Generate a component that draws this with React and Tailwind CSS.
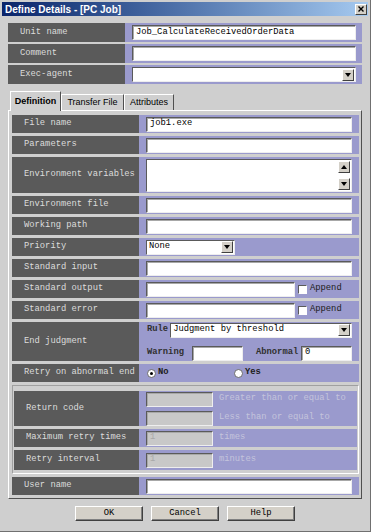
import React from 'react';

const mono = { fontFamily: '"Liberation Mono", "DejaVu Sans Mono", monospace' };

function Label({ children, className = 'w-[127px]' }) {
  return (
    <div className={`bg-[#5a5a5a] text-[#dcdcdc] text-[8.8px] pl-[12px] flex items-center shrink-0 ${className}`}>
      {children}
    </div>
  );
}

function Field({ value = '', className = 'flex-1', disabled = false }) {
  return (
    <div
      className={`h-[15px] border border-t-[#5a5a5a] border-l-[#5a5a5a] border-r-[#eeeeee] border-b-[#eeeeee] shadow-[inset_1px_1px_0_#a8a8a8] flex items-center px-[3px] text-[8.8px] ${disabled ? 'bg-[#c8c8c8] text-[#a8a8a8]' : 'bg-white text-black'} ${className}`}
    >
      {value}
    </div>
  );
}

function Arrow({ up = false }) {
  return (
    <div className="w-[12px] h-[12px] bg-[#d4d0c8] border border-t-white border-l-white border-r-[#404040] border-b-[#404040] flex items-center justify-center">
      <svg width="6" height="4" viewBox="0 0 6 4">
        {up ? <path d="M0 4 L3 0 L6 4 Z" fill="#000" /> : <path d="M0 0 L6 0 L3 4 Z" fill="#000" />}
      </svg>
    </div>
  );
}

function Select({ value = '', className = 'flex-1' }) {
  return (
    <div className={`h-[15px] bg-white border border-t-[#5a5a5a] border-l-[#5a5a5a] border-r-[#eeeeee] border-b-[#eeeeee] flex items-center justify-between pl-[2px] pr-[1px] text-[8.8px] text-black ${className}`}>
      <span>{value}</span>
      <Arrow />
    </div>
  );
}

function Row({ label, h = 'h-[18px]', labelClass = 'w-[127px]', children }) {
  return (
    <div className={`flex ${h}`}>
      <Label className={labelClass}>{label}</Label>
      <div className="flex-1 bg-[#9a9acd] flex items-center pl-[7px] pr-[7px]">{children}</div>
    </div>
  );
}

function Check() {
  return <div className="w-[9px] h-[9px] bg-white border border-t-[#5a5a5a] border-l-[#5a5a5a] border-r-white border-b-white shrink-0" />;
}

function Radio({ on }) {
  return (
    <div className="w-[9px] h-[9px] rounded-full bg-white border border-[#6a6a6a] flex items-center justify-center shrink-0">
      {on && <div className="w-[3px] h-[3px] rounded-full bg-black" />}
    </div>
  );
}

function Button({ children }) {
  return (
    <div className="w-[68px] h-[15px] bg-[#d4d0c8] border border-t-white border-l-white border-r-[#404040] border-b-[#404040] shadow-[inset_-1px_-1px_0_#808080] flex items-center justify-center text-[8.8px] text-black">
      {children}
    </div>
  );
}

export default function App() {
  return (
    <div className="w-[371px] h-[532px] bg-[#cfcfcf] flex flex-col p-[2px] border-r border-b border-[#707070]" style={mono}>
      {/* title bar */}
      <div className="h-[14px] bg-gradient-to-r from-[#0a246a] to-[#a6caf0] flex items-center justify-between pl-[3px] pr-[1px]">
        <span className="text-white font-bold text-[10px]" style={{ fontFamily: '"Liberation Sans", Arial, sans-serif' }}>
          Define Details - [PC Job]
        </span>
        <div className="w-[12px] h-[11px] bg-[#d4d0c8] border border-t-white border-l-white border-r-[#404040] border-b-[#404040] flex items-center justify-center">
          <svg width="6" height="6" viewBox="0 0 6 6">
            <path d="M0.5 0.5 L5.5 5.5 M5.5 0.5 L0.5 5.5" stroke="#000" strokeWidth="1.4" />
          </svg>
        </div>
      </div>

      <div className="flex flex-col px-[6px]">
        {/* top rows */}
        <div className="mt-[7px] flex flex-col gap-[2px]">
          <div className="flex h-[19px]">
            <Label className="w-[117px]">Unit name</Label>
            <div className="flex-1 bg-[#9a9acd] flex items-center pl-[7px] pr-[6px]">
              <Field value="Job_CalculateReceivedOrderData" />
            </div>
          </div>
          <div className="flex h-[19px]">
            <Label className="w-[117px]">Comment</Label>
            <div className="flex-1 bg-[#9a9acd] flex items-center pl-[7px] pr-[6px]">
              <Field />
            </div>
          </div>
          <div className="flex h-[19px]">
            <Label className="w-[117px]">Exec-agent</Label>
            <div className="flex-1 bg-[#9a9acd] flex items-center pl-[7px] pr-[6px]">
              <Select />
            </div>
          </div>
        </div>

        {/* tabs */}
        <div className="mt-[7px] flex items-end h-[19px] pl-[2px] text-[9px] text-black" style={{ fontFamily: '"Liberation Sans", Arial, sans-serif' }}>
          <div className="w-[51px] h-[20px] -mb-[1px] bg-[#cfcfcf] border border-b-0 border-t-white border-l-white border-r-[#505050] flex items-center justify-center font-bold relative z-10">
            Definition
          </div>
          <div className="w-[63px] h-[16px] bg-[#cfcfcf] border border-b-0 border-t-white border-l-white border-r-[#505050] flex items-center justify-center">
            Transfer File
          </div>
          <div className="w-[50px] h-[16px] bg-[#cfcfcf] border border-b-0 border-t-white border-l-white border-r-[#505050] flex items-center justify-center">
            Attributes
          </div>
        </div>

        {/* tab panel */}
        <div className="border border-t-white border-l-white border-r-[#505050] border-b-[#505050] pt-[4px] pl-[3px] pr-[2px] pb-[3px] flex flex-col gap-[3px]">
          <Row label="File name">
            <Field value="job1.exe" />
          </Row>
          <Row label="Parameters">
            <Field />
          </Row>
          <Row label="Environment variables" h="h-[36px]">
            <div className="flex-1 h-[33px] bg-white border border-t-[#5a5a5a] border-l-[#5a5a5a] border-r-[#eeeeee] border-b-[#eeeeee] flex justify-end pr-[1px] py-[1px]">
              <div className="flex flex-col justify-between">
                <Arrow up />
                <Arrow />
              </div>
            </div>
          </Row>
          <Row label="Environment file">
            <Field />
          </Row>
          <Row label="Working path">
            <Field />
          </Row>
          <Row label="Priority">
            <Select value="None" className="w-[89px]" />
          </Row>
          <Row label="Standard input">
            <Field />
          </Row>
          <Row label="Standard output">
            <div className="flex-1 flex items-center gap-[3px]">
              <Field className="w-[149px]" />
              <Check />
              <span className="text-[8.8px] text-[#202020]">Append</span>
            </div>
          </Row>
          <Row label="Standard error">
            <div className="flex-1 flex items-center gap-[3px]">
              <Field className="w-[149px]" />
              <Check />
              <span className="text-[8.8px] text-[#202020]">Append</span>
            </div>
          </Row>
          <Row label="End judgment" h="h-[39px]">
            <div className="flex-1 flex flex-col gap-[8px] text-[8.8px] text-[#303030] font-bold">
              <div className="flex items-center gap-[2px]">
                <span className="pl-[1px]">Rule</span>
                <Select value="Judgment by threshold" className="flex-1 font-normal" />
              </div>
              <div className="flex items-center">
                <span className="pl-[1px] w-[46px]">Warning</span>
                <Field className="w-[51px]" />
                <span className="ml-[13px] w-[45px]">Abnormal</span>
                <Field value="0" className="flex-1 font-normal" />
              </div>
            </div>
          </Row>
          <Row label="Retry on abnormal end">
            <div className="flex items-center text-[8.8px] text-[#202020] font-bold">
              <div className="flex items-center gap-[2px] w-[88px] pl-[1px]">
                <Radio on />
                <span>No</span>
              </div>
              <div className="flex items-center gap-[2px]">
                <Radio />
                <span>Yes</span>
              </div>
            </div>
          </Row>

          {/* retry group */}
          <div className="border border-t-[#a0a0a0] border-l-[#a0a0a0] border-r-white border-b-white pt-[5px] pb-[3px] px-[1px] flex flex-col gap-[3px]">
            <Row label="Return code" h="h-[35px]" labelClass="w-[125px]">
              <div className="flex flex-col gap-[4px] text-[8.8px] text-[#c4c4dc]">
                <div className="flex items-center gap-[6px]">
                  <Field disabled className="w-[67px] h-[14px]" />
                  <span>Greater than or equal to</span>
                </div>
                <div className="flex items-center gap-[6px]">
                  <Field disabled className="w-[67px] h-[14px]" />
                  <span>Less than or equal to</span>
                </div>
              </div>
            </Row>
            <Row label="Maximum retry times" labelClass="w-[125px]">
              <div className="flex items-center gap-[6px] text-[8.8px] text-[#c4c4dc]">
                <Field disabled value="1" className="w-[67px]" />
                <span>times</span>
              </div>
            </Row>
            <Row label="Retry interval" h="h-[20px]" labelClass="w-[125px]">
              <div className="flex items-center gap-[6px] text-[8.8px] text-[#c4c4dc]">
                <Field disabled value="1" className="w-[67px]" />
                <span>minutes</span>
              </div>
            </Row>
          </div>

          <Row label="User name">
            <Field />
          </Row>
        </div>

        {/* buttons */}
        <div className="mt-[7px] flex justify-center gap-[8px]">
          <Button>OK</Button>
          <Button>Cancel</Button>
          <Button>Help</Button>
        </div>
      </div>
    </div>
  );
}
